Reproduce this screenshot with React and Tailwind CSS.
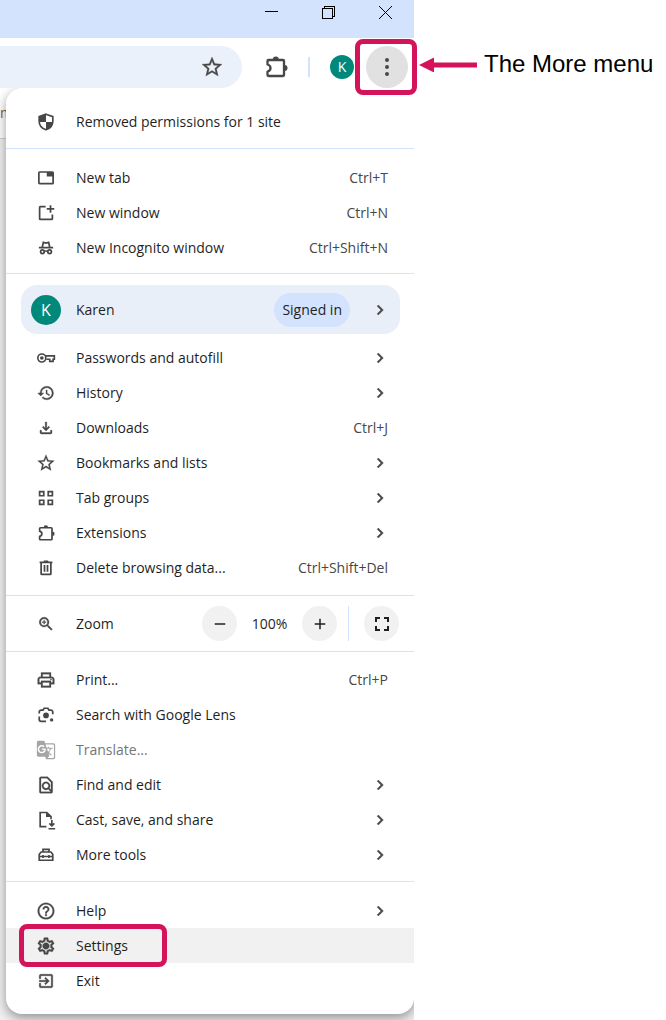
import React from 'react'
import {
  MdAdd,
  MdChevronRight,
  MdExitToApp,
  MdFullscreen,
  MdGTranslate,
  MdHelpOutline,
  MdHistory,
  MdOutlineFileDownload,
  MdOutlineFindInPage,
  MdOutlinePrint,
  MdOutlineSettings,
  MdRemove,
  MdStarBorder,
  MdZoomIn,
} from 'react-icons/md'

const Svg = ({ children, className = 'size-[18px]' }) => (
  <svg
    viewBox="0 0 24 24"
    className={className}
    fill="none"
    stroke="currentColor"
    strokeWidth="2.300"
    aria-hidden="true"
  >
    {children}
  </svg>
)

const ShieldIcon = () => (
  <Svg className="size-5">
    <path d="M12 2.600 20.200 5.600V11c0 5-3.400 8.800-8.200 10.400C7.200 19.800 3.800 16 3.800 11V5.600z" strokeWidth="2" />
    <path d="M12 2.500V12H3.800V5.600zM12 12h8.200c-.6 4.500-3.700 8-8.200 9.400z" fill="currentColor" stroke="none" />
  </Svg>
)

const TabIcon = () => (
  <Svg>
    <rect x="2.500" y="4" width="19" height="15.500" rx="1" />
    <path d="M13 4h8.500v6H13z" fill="currentColor" stroke="none" />
  </Svg>
)

const NewWindowIcon = () => (
  <Svg>
    <path d="M11.500 3.500H4.500a1 1 0 0 0-1 1v15a1 1 0 0 0 1 1h15a1 1 0 0 0 1-1V14M18 1.500v10M13 6.500h10" />
  </Svg>
)

const IncognitoIcon = () => (
  <Svg>
    <path d="M2.500 11.500h19M7 11l1.500-6.500 3.500 1 3.500-1L17 11" />
    <circle cx="7.200" cy="17" r="2.400" />
    <circle cx="16.800" cy="17" r="2.400" />
    <path d="M9.500 16.600c1-.8 4-.8 5 0" />
  </Svg>
)

const KeyIcon = () => (
  <Svg className="size-5">
    <path d="M12 9.500h10v4h-1.500v2.500h-4v-2.500h-4" strokeWidth="2" />
    <circle cx="7" cy="12" r="4.800" strokeWidth="2" />
    <circle cx="7" cy="12" r="2.200" fill="currentColor" stroke="none" />
  </Svg>
)

const GroupsIcon = () => (
  <Svg>
    <path d="M3.500 3.500H9V9H3.500zM15 3.500h5.500V9H15zM3.500 15H9v5.500H3.500zM15 15h5.500v5.500H15z" />
  </Svg>
)

const PuzzleIcon = ({ className }) => (
  <Svg className={className}>
    <path d="M3.500 9.500V6a1 1 0 0 1 1-1H19a1 1 0 0 1 1 1v14a1 1 0 0 1-1 1H4.500a1 1 0 0 1-1-1v-3.500C7.500 15.500 7.500 10.500 3.500 9.500z" strokeLinejoin="round" />
    <path d="M8.800 4.500a3 3 0 0 1 6 0zM20.500 10a3 3 0 0 1 0 6z" fill="currentColor" stroke="none" />
  </Svg>
)

const TrashIcon = () => (
  <Svg>
    <path d="M3.500 4.500h17M9 3h6M5.500 5v14.500a1 1 0 0 0 1 1h11a1 1 0 0 0 1-1V5M10 8v9M14 8v9" />
  </Svg>
)

const LensIcon = () => (
  <Svg>
    <path d="M3 10V8a2.500 2.500 0 0 1 2.500-2.500H8L9.500 3h5L16 5.500h2.500A2.500 2.500 0 0 1 21 8v3M3 14v4a2.500 2.500 0 0 0 2.500 2.500H12" />
    <circle cx="12" cy="12.500" r="3.800" fill="currentColor" stroke="none" />
    <circle cx="19.500" cy="18.500" r="2.300" fill="currentColor" stroke="none" />
  </Svg>
)

const SaveShareIcon = () => (
  <Svg className="size-5">
    <path d="M12.500 20H5V3h8l5 5v3" strokeWidth="2" />
    <path d="M12 3v5.500h6z" fill="currentColor" stroke="none" />
    <path d="M19 12v7M16 16l3 3 3-3M15 22.500h8" strokeWidth="2" />
  </Svg>
)

const ToolboxIcon = () => (
  <Svg>
    <path d="M8 8V4.500h8V8M3 19v-8l2.500-3h13l2.500 3v8zM3 14h18M8 12v4M16 12v4" />
  </Svg>
)

const GearIcon = ({ className }) => (
  <Svg className={className}>
    <MdOutlineSettings size={24} className="[&>path:not([fill=none])]:stroke-[0.5px]" />
    <circle cx="12" cy="12" r="3.400" fill="currentColor" stroke="none" />
  </Svg>
)

const DotsIcon = () => (
  <Svg className="size-7">
    <g fill="currentColor" stroke="none">
      <circle cx="12" cy="6" r="1.700" />
      <circle cx="12" cy="12" r="1.700" />
      <circle cx="12" cy="18" r="1.700" />
    </g>
  </Svg>
)

const Avatar = ({ className }) => (
  <span className={`flex shrink-0 items-center justify-center rounded-full bg-[#00897b] text-white ${className}`}>
    K
  </span>
)

const Chevron = () => (
  <MdChevronRight className="-mr-0.5 size-5 text-[#474747] [&>path:not([fill=none])]:stroke-[0.5px]" />
)

const Separator = () => <hr className="border-[#d3e3fd]" />

const iconClass = (small, disabled) => {
  if (disabled) return 'size-5'
  return small
    ? 'size-[18px] [&>path:not([fill=none])]:stroke-[0.5px]'
    : 'size-5 [&>path:not([fill=none])]:stroke-[0.3px]'
}

const MenuItem = ({ icon: Icon, label, shortcut, submenu, disabled, active, small, handDrawn }) => (
  <button
    type="button"
    disabled={disabled}
    className={`flex h-[35px] w-full items-center gap-5 pr-[26px] pl-[30px] text-left ${
      active ? 'bg-[#f1f1f1]' : ''
    } ${disabled ? 'text-[#757575]' : 'text-[#1f1f1f]'}`}
  >
    <span
      className={`flex size-5 shrink-0 items-center justify-center ${disabled ? 'text-[#a5a5a5]' : 'text-[#474747]'}`}
    >
      {handDrawn ? <Icon /> : <Icon className={iconClass(small, disabled)} />}
    </span>
    <span className="flex-1 whitespace-nowrap">{label}</span>
    {shortcut && <span className="whitespace-nowrap text-[#474747]">{shortcut}</span>}
    {submenu && <Chevron />}
  </button>
)

const windowItems = [
  { icon: TabIcon, label: 'New tab', shortcut: 'Ctrl+T', handDrawn: true },
  { icon: NewWindowIcon, label: 'New window', shortcut: 'Ctrl+N', handDrawn: true },
  { icon: IncognitoIcon, label: 'New Incognito window', shortcut: 'Ctrl+Shift+N', handDrawn: true },
]

const dataItems = [
  { icon: KeyIcon, label: 'Passwords and autofill', submenu: true, handDrawn: true },
  { icon: MdHistory, label: 'History', submenu: true, small: true },
  { icon: MdOutlineFileDownload, label: 'Downloads', shortcut: 'Ctrl+J', small: true },
  { icon: MdStarBorder, label: 'Bookmarks and lists', submenu: true },
  { icon: GroupsIcon, label: 'Tab groups', submenu: true, handDrawn: true },
  { icon: PuzzleIcon, label: 'Extensions', submenu: true, handDrawn: true },
  { icon: TrashIcon, label: 'Delete browsing data...', shortcut: 'Ctrl+Shift+Del', handDrawn: true },
]

const pageItems = [
  { icon: MdOutlinePrint, label: 'Print...', shortcut: 'Ctrl+P' },
  { icon: LensIcon, label: 'Search with Google Lens', handDrawn: true },
  { icon: MdGTranslate, label: 'Translate...', disabled: true },
  { icon: MdOutlineFindInPage, label: 'Find and edit', submenu: true },
  { icon: SaveShareIcon, label: 'Cast, save, and share', submenu: true, handDrawn: true },
  { icon: ToolboxIcon, label: 'More tools', submenu: true, handDrawn: true },
]

const TitleBar = () => (
  <div className="flex h-[38px] items-start justify-end bg-[#d3e3fd] text-black">
    <button type="button" aria-label="Minimize" className="flex h-6 w-[57px] items-center justify-center">
      <svg viewBox="0 0 13 13" className="size-[13px]" stroke="currentColor" shapeRendering="crispEdges">
        <path d="M0 5.500h13" />
      </svg>
    </button>
    <button type="button" aria-label="Restore" className="flex h-6 w-[57px] items-center justify-center">
      <svg viewBox="0 0 13 13" className="size-[13px]" stroke="currentColor" fill="none" shapeRendering="crispEdges">
        <path d="M.5 2.500h10v10H.5zM2.500 2.500v-2h10v10h-2" />
      </svg>
    </button>
    <button type="button" aria-label="Close" className="flex h-6 w-[57px] items-center justify-center">
      <svg viewBox="0 0 13 13" className="size-[13px]" stroke="currentColor">
        <path d="M0 0l13 13M13 0L0 13" />
      </svg>
    </button>
  </div>
)

const Toolbar = () => (
  <div className="flex h-[50px] items-center bg-white pt-2 pr-[6px] text-[#474747]">
    <div className="flex h-[42px] min-w-0 flex-1 items-center rounded-r-full bg-[#ebf1fa] pr-[18px]">
      <input aria-label="Address" className="min-w-0 flex-1 outline-none" />
      <button type="button" aria-label="Bookmark this tab">
        <MdStarBorder className="size-6 [&>path:not([fill=none])]:stroke-[0.3px]" />
      </button>
    </div>
    <button type="button" aria-label="Extensions" className="ml-[22px]">
      <PuzzleIcon className="size-6" />
    </button>
    <span className="mx-5 h-5 w-0.5 bg-[#d3e3fd]" />
    <button type="button" aria-label="Profile">
      <Avatar className="size-6 text-sm" />
    </button>
    <div className="relative z-10 ml-3">
      <button
        type="button"
        aria-label="More"
        className="flex size-[42px] items-center justify-center rounded-full bg-[#e1e1e1]"
      >
        <DotsIcon />
      </button>
      <span className="pointer-events-none absolute -inset-y-[7px] -right-[9px] -left-[11px] rounded-lg border-5 border-[#d4145a]" />
    </div>
  </div>
)

const MoreMenu = () => (
  <div className="relative rounded-l-2xl rounded-br-2xl bg-white pb-4 shadow-[0_4px_12px_rgba(0,0,0,0.4)]">
    <div className="flex h-[60px] items-center pt-2">
      <MenuItem icon={ShieldIcon} label="Removed permissions for 1 site" handDrawn />
    </div>
    <Separator />

    <div className="pt-[11px] pb-2">
      {windowItems.map((item) => (
        <MenuItem key={item.label} {...item} />
      ))}
    </div>
    <Separator />

    <div className="pt-[11px] pr-3.5 pb-[6px] pl-[15px]">
      <button
        type="button"
        className="flex h-[49px] w-full items-center rounded-2xl bg-[#e9eff9] pr-3 pl-2.5 text-left text-[#1f1f1f]"
      >
        <Avatar className="size-[30px] text-base" />
        <span className="ml-[15px] flex-1">Karen</span>
        <span className="mr-5 rounded-full bg-[#d3e3fd] px-2 py-[7px]">Signed in</span>
        <Chevron />
      </button>
    </div>

    <div className="pb-2.5">
      {dataItems.map((item) => (
        <MenuItem key={item.label} {...item} />
      ))}
    </div>
    <Separator />

    <div className="flex h-[55px] items-center pr-[15px] pl-[31px] text-[#1f1f1f]">
      <MdZoomIn className="mr-[21px] size-[18px] text-[#474747] [&>path:not([fill=none])]:stroke-[0.5px]" />
      <span className="flex-1">Zoom</span>
      <button
        type="button"
        aria-label="Zoom out"
        className="flex size-[35px] items-center justify-center rounded-full bg-[#f1f1f1]"
      >
        <MdRemove className="size-[18px]" />
      </button>
      <span className="w-[65px] text-center">100%</span>
      <button
        type="button"
        aria-label="Zoom in"
        className="flex size-[35px] items-center justify-center rounded-full bg-[#f1f1f1]"
      >
        <MdAdd className="size-[18px]" />
      </button>
      <span className="ml-[11px] h-[35px] w-px bg-[#d3e3fd]" />
      <button
        type="button"
        aria-label="Full screen"
        className="ml-[15px] flex size-[35px] items-center justify-center rounded-full bg-[#f1f1f1]"
      >
        <MdFullscreen className="size-6" />
      </button>
    </div>
    <Separator />

    <div className="pt-2.5 pb-[9px]">
      {pageItems.map((item) => (
        <MenuItem key={item.label} {...item} />
      ))}
    </div>
    <Separator />

    <div className="pt-[11px]">
      <MenuItem icon={MdHelpOutline} label="Help" submenu />
      <div className="relative">
        <MenuItem icon={GearIcon} label="Settings" active />
        <span className="pointer-events-none absolute -inset-y-1 left-[13px] w-[148px] rounded-lg border-5 border-[#d4145a]" />
      </div>
      <MenuItem icon={MdExitToApp} label="Exit" small />
    </div>
  </div>
)

const App = () => {
  return (
    <main className="flex items-start bg-white">
      <section className="min-w-0 flex-1 font-['Open_Sans','Noto_Sans',sans-serif] text-sm">
        <TitleBar />
        <Toolbar />
        <div className="relative overflow-clip bg-[#f1f1f1] pb-[7px] pl-[6px]">
          <div className="absolute inset-x-0 top-0 h-[51px] border-b border-[#d0d0d0] bg-white pt-[15px] text-[#8a5a3c]">
            m
          </div>
          <MoreMenu />
        </div>
      </section>

      <p className="mt-12 flex w-[252px] shrink-0 items-center gap-[7px] pl-[5px] font-['Liberation_Sans',Arial,sans-serif] text-2xl whitespace-nowrap text-black">
        <svg viewBox="0 0 58 16" className="h-4 w-[58px] shrink-0 text-[#d4145a]" fill="currentColor" aria-hidden="true">
          <path d="M0 9 15 1.500v5h43v5H15v5z" />
        </svg>
        The More menu
      </p>
    </main>
  )
}

export default App
